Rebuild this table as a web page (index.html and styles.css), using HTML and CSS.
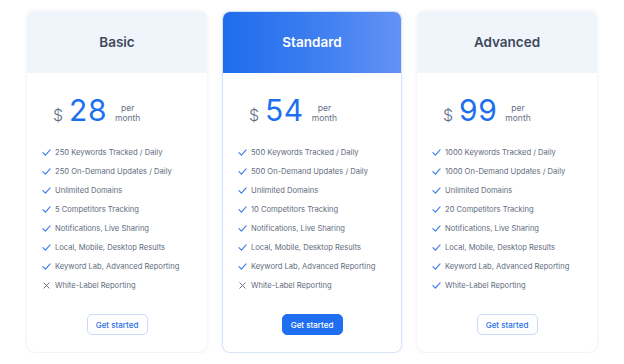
FILE: index.html
```html
<!DOCTYPE html>
<html>
<head>
<meta charset="utf-8">
<link rel="stylesheet" href="styles.css">
</head>
<body>
<div class="plans">
  <div class="card">
    <div class="head"><h2>Basic</h2></div>
    <div class="body">
      <div class="price"><span class="cur">$</span><span class="amt">28</span><span class="per">per<br>month</span></div>
      <ul class="feats">
        <li><svg viewBox="0 0 10 10"><path d="M1 5.2 3.8 8 9 2"/></svg>250 Keywords Tracked / Daily</li>
        <li><svg viewBox="0 0 10 10"><path d="M1 5.2 3.8 8 9 2"/></svg>250 On-Demand Updates / Daily</li>
        <li><svg viewBox="0 0 10 10"><path d="M1 5.2 3.8 8 9 2"/></svg>Unlimited Domains</li>
        <li><svg viewBox="0 0 10 10"><path d="M1 5.2 3.8 8 9 2"/></svg>5 Competitors Tracking</li>
        <li><svg viewBox="0 0 10 10"><path d="M1 5.2 3.8 8 9 2"/></svg>Notifications, Live Sharing</li>
        <li><svg viewBox="0 0 10 10"><path d="M1 5.2 3.8 8 9 2"/></svg>Local, Mobile, Desktop Results</li>
        <li><svg viewBox="0 0 10 10"><path d="M1 5.2 3.8 8 9 2"/></svg>Keyword Lab, Advanced Reporting</li>
        <li><svg class="x" viewBox="0 0 10 10"><path d="M2 2 8 8M8 2 2 8"/></svg>White-Label Reporting</li>
      </ul>
      <div class="cta"><button class="btn">Get started</button></div>
    </div>
  </div>
  <div class="card featured">
    <div class="head"><h2>Standard</h2></div>
    <div class="body">
      <div class="price"><span class="cur">$</span><span class="amt">54</span><span class="per">per<br>month</span></div>
      <ul class="feats">
        <li><svg viewBox="0 0 10 10"><path d="M1 5.2 3.8 8 9 2"/></svg>500 Keywords Tracked / Daily</li>
        <li><svg viewBox="0 0 10 10"><path d="M1 5.2 3.8 8 9 2"/></svg>500 On-Demand Updates / Daily</li>
        <li><svg viewBox="0 0 10 10"><path d="M1 5.2 3.8 8 9 2"/></svg>Unlimited Domains</li>
        <li><svg viewBox="0 0 10 10"><path d="M1 5.2 3.8 8 9 2"/></svg>10 Competitors Tracking</li>
        <li><svg viewBox="0 0 10 10"><path d="M1 5.2 3.8 8 9 2"/></svg>Notifications, Live Sharing</li>
        <li><svg viewBox="0 0 10 10"><path d="M1 5.2 3.8 8 9 2"/></svg>Local, Mobile, Desktop Results</li>
        <li><svg viewBox="0 0 10 10"><path d="M1 5.2 3.8 8 9 2"/></svg>Keyword Lab, Advanced Reporting</li>
        <li><svg class="x" viewBox="0 0 10 10"><path d="M2 2 8 8M8 2 2 8"/></svg>White-Label Reporting</li>
      </ul>
      <div class="cta"><button class="btn primary">Get started</button></div>
    </div>
  </div>
  <div class="card">
    <div class="head"><h2>Advanced</h2></div>
    <div class="body">
      <div class="price"><span class="cur">$</span><span class="amt">99</span><span class="per">per<br>month</span></div>
      <ul class="feats">
        <li><svg viewBox="0 0 10 10"><path d="M1 5.2 3.8 8 9 2"/></svg>1000 Keywords Tracked / Daily</li>
        <li><svg viewBox="0 0 10 10"><path d="M1 5.2 3.8 8 9 2"/></svg>1000 On-Demand Updates / Daily</li>
        <li><svg viewBox="0 0 10 10"><path d="M1 5.2 3.8 8 9 2"/></svg>Unlimited Domains</li>
        <li><svg viewBox="0 0 10 10"><path d="M1 5.2 3.8 8 9 2"/></svg>20 Competitors Tracking</li>
        <li><svg viewBox="0 0 10 10"><path d="M1 5.2 3.8 8 9 2"/></svg>Notifications, Live Sharing</li>
        <li><svg viewBox="0 0 10 10"><path d="M1 5.2 3.8 8 9 2"/></svg>Local, Mobile, Desktop Results</li>
        <li><svg viewBox="0 0 10 10"><path d="M1 5.2 3.8 8 9 2"/></svg>Keyword Lab, Advanced Reporting</li>
        <li><svg viewBox="0 0 10 10"><path d="M1 5.2 3.8 8 9 2"/></svg>White-Label Reporting</li>
      </ul>
      <div class="cta"><button class="btn">Get started</button></div>
    </div>
  </div>
</div>
</body>
</html>
```
FILE: styles.css
```css
* { box-sizing: border-box; }
html, body { margin: 0; padding: 0; background: #ffffff; }
body { font-family: Inter, "Noto Sans", sans-serif; color: #5c6678; }
.plans {
  display: flex;
  gap: 15px;
  padding: 11px 0 0 27px;
}
.card {
  width: 180px;
  height: 341px;
  background: #fff;
  border-radius: 8px;
  box-shadow: 0 0 4px rgba(30, 50, 90, 0.07), 0 1px 2px rgba(30, 50, 90, 0.04);
  overflow: hidden;
  display: flex;
  flex-direction: column;
}
.card.featured {
  border: 1px solid #d6e3fa;
  box-shadow: 0 0 4px rgba(40, 100, 230, 0.10);
  height: 342px;
}
.head {
  height: 62px;
  background: #f0f4fb;
  display: flex;
  align-items: center;
  justify-content: center;
}
.featured .head {
  background: linear-gradient(90deg, #1f6cec 0%, #3f7ff0 55%, #6492f6 100%);
  margin: -1px -1px 0 -1px;
}
.head h2 {
  margin: 0;
  font-size: 13.5px;
  font-weight: 600;
  color: #3e4a5c;
}
.featured .head h2 { color: #ffffff; }
.body {
  flex: 1;
  display: flex;
  flex-direction: column;
  padding: 19px 0 0 0;
}
.price {
  padding-left: 26px;
  height: 41px;
  line-height: 36px;
  white-space: nowrap;
}
.cur {
  display: inline-block;
  font-size: 16px;
  font-weight: 300;
  color: #5d6b82;
  margin-right: 6px;
}
.amt {
  display: inline-block;
  font-size: 30px;
  font-weight: 400;
  color: #1e6ff0;
  letter-spacing: 0.5px;
  margin-right: 8px;
}
.per {
  display: inline-block;
  font-size: 8.5px;
  line-height: 10px;
  color: #667085;
  text-align: center;
}
.feats {
  list-style: none;
  margin: 10px 0 0 0;
  padding: 0 0 0 15px;
}
.feats li {
  display: flex;
  align-items: center;
  height: 19px;
  font-size: 7.6px;
  color: #626c7d;
}
.feats svg {
  width: 9px;
  height: 9px;
  margin-right: 4px;
  fill: none;
  stroke: #3a7bee;
  stroke-width: 1.2;
  stroke-linecap: round;
  stroke-linejoin: round;
}
.feats svg.x { stroke: #626c7d; stroke-width: 1.05; }
.cta {
  display: flex;
  justify-content: center;
  margin-top: 19px;
}
.btn {
  font-family: Inter, "Noto Sans", sans-serif;
  font-size: 8px;
  font-weight: 500;
  height: 21px;
  width: 61px;
  padding: 0;
  border: 1px solid #c9dbf8;
  border-radius: 5px;
  background: #fff;
  color: #2a6fe8;
}
.btn.primary {
  background: #1f6ff0;
  border-color: #1f6ff0;
  color: #fff;
}
```
